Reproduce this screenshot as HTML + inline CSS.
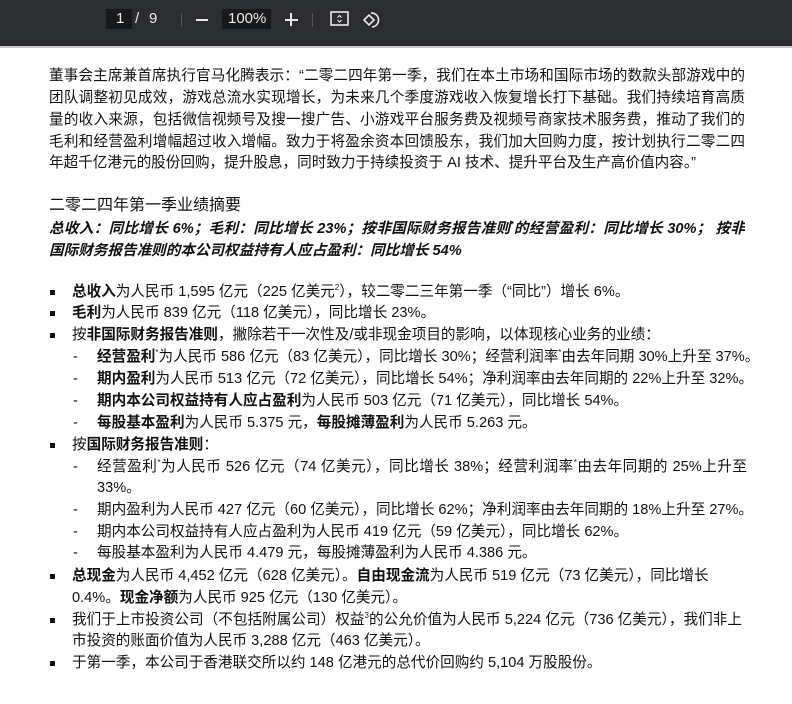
<!DOCTYPE html>
<html><head><meta charset="utf-8"><style>
body{margin:0;width:792px;height:704px;overflow:hidden;background:#fff;font-family:"Liberation Sans","Noto Sans CJK SC",sans-serif;color:#111;}
.tb{position:absolute;left:0;top:0;width:792px;height:46px;background:#2b2d31;border-bottom:2px solid #c8c8c8;color:#e8e8e8;font-size:15px}
.l{position:absolute;font-size:14.6px;line-height:20px;white-space:nowrap}
.j{text-align:justify;text-align-last:justify;white-space:normal;height:20px;overflow:hidden}
.b{font-weight:bold}
.i{font-style:italic;font-weight:bold}
.bul{position:absolute;left:50px;width:5px;height:5px;background:#111}
.d{position:absolute;left:73px;font-size:14.6px;line-height:20px}
sup{line-height:0;vertical-align:0;position:relative;top:-6px;font-size:8px}
</style></head><body>
<div class="tb">
<div style="position:absolute;left:106px;top:9px;width:26px;height:20px;background:#18191b"></div>
<div style="position:absolute;left:116px;top:10px">1</div>
<div style="position:absolute;left:135px;top:10px">/</div>
<div style="position:absolute;left:149px;top:10px">9</div>
<div style="position:absolute;left:181px;top:13px;width:1px;height:14px;background:#555"></div>
<div style="position:absolute;left:196px;top:19px;width:12px;height:2px;background:#e8e8e8"></div>
<div style="position:absolute;left:222px;top:9px;width:49px;height:20px;background:#18191b"></div>
<div style="position:absolute;left:228px;top:10px">100%</div>
<div style="position:absolute;left:285px;top:19px;width:13px;height:2px;background:#e8e8e8"></div>
<div style="position:absolute;left:290px;top:13px;width:2px;height:13px;background:#e8e8e8"></div>
<div style="position:absolute;left:312px;top:13px;width:1px;height:14px;background:#555"></div>
<svg style="position:absolute;left:330px;top:10px" width="20" height="18" viewBox="0 0 20 18"><rect x="1" y="2" width="17" height="13" fill="none" stroke="#e8e8e8" stroke-width="1.6"/><path d="M7.5 7.5l2-2 2 2M7.5 10l2 2 2-2" fill="none" stroke="#e8e8e8" stroke-width="1.2"/></svg>
<svg style="position:absolute;left:362px;top:10px" width="20" height="20" viewBox="0 0 20 20"><path d="M2 10l5-5 5 5-5 5z" fill="none" stroke="#e8e8e8" stroke-width="1.6"/><path d="M9 3a7 7 0 1 1 1 14" fill="none" stroke="#e8e8e8" stroke-width="1.6"/></svg>
</div>

<div class="l j" style="left:49px;top:66px;width:696px">董事会主席兼首席执行官马化腾表示：“二零二四年第一季，我们在本土市场和国际市场的数款头部游戏中的</div>
<div class="l j" style="left:49px;top:88px;width:696px">团队调整初见成效，游戏总流水实现增长，为未来几个季度游戏收入恢复增长打下基础。我们持续培育高质</div>
<div class="l j" style="left:49px;top:110px;width:696px">量的收入来源，包括微信视频号及搜一搜广告、小游戏平台服务费及视频号商家技术服务费，推动了我们的</div>
<div class="l j" style="left:49px;top:132px;width:696px">毛利和经营盈利增幅超过收入增幅。致力于将盈余资本回馈股东，我们加大回购力度，按计划执行二零二四</div>
<div class="l" style="left:49px;top:153px">年超千亿港元的股份回购，提升股息，同时致力于持续投资于 AI 技术、提升平台及生产高价值内容。”</div>

<div class="l" style="left:49px;top:196px;font-size:16px">二零二四年第一季业绩摘要</div>
<div class="l i j" style="left:49px;top:219px;width:696px">总收入：同比增长 6%；毛利：同比增长 23%；按非国际财务报告准则<sup>*</sup>的经营盈利：同比增长 30%； 按非</div>
<div class="l i" style="left:49px;top:241px">国际财务报告准则的本公司权益持有人应占盈利：同比增长 54%</div>

<div class="bul" style="top:290px"></div><div class="l" style="left:72px;top:282px"><b>总收入</b>为人民币 1,595 亿元（225 亿美元<sup>2</sup>），较二零二三年第一季（“同比”）增长 6%。</div>
<div class="bul" style="top:311px"></div><div class="l" style="left:72px;top:303px"><b>毛利</b>为人民币 839 亿元（118 亿美元），同比增长 23%。</div>
<div class="bul" style="top:333px"></div><div class="l" style="left:72px;top:325px">按<b>非国际财务报告准则</b>，撇除若干一次性及/或非现金项目的影响，以体现核心业务的业绩：</div>
<div class="d" style="top:347px">-</div><div class="l" style="left:97px;top:347px"><b>经营盈利</b><sup>*</sup>为人民币 586 亿元（83 亿美元），同比增长 30%；经营利润率<sup>*</sup>由去年同期 30%上升至 37%。</div>
<div class="d" style="top:369px">-</div><div class="l" style="left:97px;top:369px"><b>期内盈利</b>为人民币 513 亿元（72 亿美元），同比增长 54%；净利润率由去年同期的 22%上升至 32%。</div>
<div class="d" style="top:391px">-</div><div class="l" style="left:97px;top:391px"><b>期内本公司权益持有人应占盈利</b>为人民币 503 亿元（71 亿美元），同比增长 54%。</div>
<div class="d" style="top:413px">-</div><div class="l" style="left:97px;top:413px"><b>每股基本盈利</b>为人民币 5.375 元，<b>每股摊薄盈利</b>为人民币 5.263 元。</div>
<div class="bul" style="top:443px"></div><div class="l" style="left:72px;top:435px">按<b>国际财务报告准则</b>：</div>
<div class="d" style="top:457px">-</div><div class="l j" style="left:97px;top:457px;width:650px">经营盈利<sup>*</sup>为人民币 526 亿元（74 亿美元），同比增长 38%；经营利润率<sup>*</sup>由去年同期的 25%上升至</div>
<div class="l" style="left:97px;top:478px">33%。</div>
<div class="d" style="top:500px">-</div><div class="l" style="left:97px;top:500px">期内盈利为人民币 427 亿元（60 亿美元），同比增长 62%；净利润率由去年同期的 18%上升至 27%。</div>
<div class="d" style="top:522px">-</div><div class="l" style="left:97px;top:522px">期内本公司权益持有人应占盈利为人民币 419 亿元（59 亿美元），同比增长 62%。</div>
<div class="d" style="top:543px">-</div><div class="l" style="left:97px;top:543px">每股基本盈利为人民币 4.479 元，每股摊薄盈利为人民币 4.386 元。</div>
<div class="bul" style="top:574px"></div><div class="l" style="left:72px;top:566px"><b>总现金</b>为人民币 4,452 亿元（628 亿美元）。<b>自由现金流</b>为人民币 519 亿元（73 亿美元），同比增长</div>
<div class="l" style="left:72px;top:588px">0.4%。<b>现金净额</b>为人民币 925 亿元（130 亿美元）。</div>
<div class="bul" style="top:618px"></div><div class="l j" style="left:72px;top:610px;width:670px">我们于上市投资公司（不包括附属公司）权益<sup>3</sup>的公允价值为人民币 5,224 亿元（736 亿美元），我们非上</div>
<div class="l" style="left:72px;top:631px">市投资的账面价值为人民币 3,288 亿元（463 亿美元）。</div>
<div class="bul" style="top:661px"></div><div class="l" style="left:72px;top:653px">于第一季，本公司于香港联交所以约 148 亿港元的总代价回购约 5,104 万股股份。</div>
</body></html>
